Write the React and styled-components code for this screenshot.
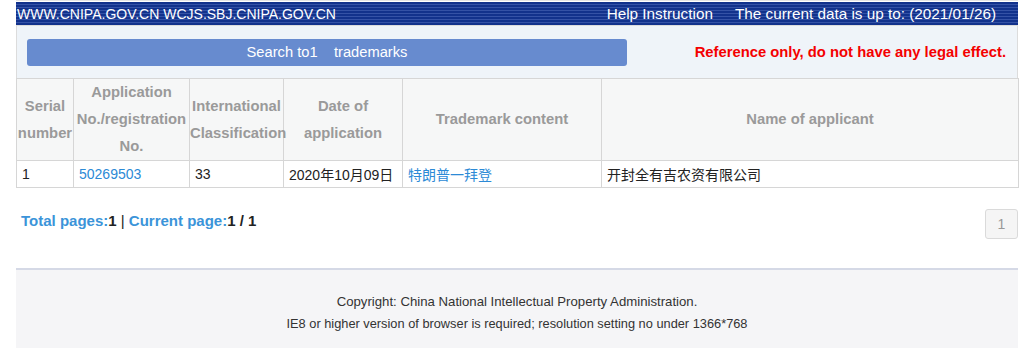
import React from 'react'
import styled, { createGlobalStyle } from 'styled-components'

const Global = createGlobalStyle`
  body {
    margin: 0;
    background: #fff;
    font-family: "Liberation Sans", "Noto Sans CJK SC", sans-serif;
  }
`

const Page = styled.div`
  width: 1002px;
  margin-left: 16px;
  padding-top: 1px;
  border-top: 1px solid #e4e4e4;
`

const TopBar = styled.div`
  height: 23px;
  display: flex;
  align-items: center;
  justify-content: space-between;
  padding: 0 22px 0 1px;
  color: #fff;
  font-size: 14px;
  background: repeating-linear-gradient(
    to bottom,
    #12328c 0px,
    #12328c 2px,
    #3452a6 2px,
    #3452a6 3px
  );
`

const TopLinks = styled.div`
  display: flex;
  gap: 22px;
  font-size: 15.3px;
`

const SearchPanel = styled.div`
  height: 52px;
  display: flex;
  align-items: center;
  justify-content: space-between;
  padding: 0 11px 0 10px;
  background: #eff4f9;
  border: 1px solid #dcdcdc;
  border-bottom: none;
`

const SearchButton = styled.div`
  width: 600px;
  height: 27px;
  border-radius: 3px;
  background: #678bcf;
  color: #fff;
  font-size: 14.7px;
  display: flex;
  align-items: center;
  justify-content: center;
  white-space: pre;
`

const Notice = styled.div`
  color: #f40000;
  font-weight: bold;
  font-size: 14.8px;
`

const Table = styled.table`
  width: 100%;
  table-layout: fixed;
  border-collapse: collapse;
  font-size: 14px;
`

const Th = styled.th`
  height: 81px;
  padding: 0;
  border: 1px solid #d6d6d6;
  background: #f6f7f7;
  color: #9a9a9a;
  font-weight: bold;
  font-size: 14.8px;
  line-height: 27px;
  text-align: center;
  white-space: nowrap;
`

const Td = styled.td`
  height: 26px;
  padding: 0 5px;
  border: 1px solid #d6d6d6;
  color: ${p => (p.$link ? '#2c8ad6' : '#222')};
  text-align: left;
  white-space: nowrap;
`

const Pager = styled.div`
  display: flex;
  justify-content: space-between;
  align-items: flex-start;
  padding: 21px 0 0 5px;
  height: 59px;
`

const PageInfo = styled.div`
  font-size: 15px;
  font-weight: bold;
  color: #3b94d9;
  padding-top: 3px;
  b {
    color: #222;
  }
`

const Divider = styled.span`
  color: #222;
  font-weight: normal;
`

const PageButton = styled.div`
  width: 31px;
  height: 28px;
  border: 1px solid #dadada;
  border-radius: 3px;
  background: #f5f5f5;
  color: #999;
  font-size: 14px;
  display: flex;
  align-items: center;
  justify-content: center;
`

const Footer = styled.footer`
  border-top: 2px solid #d5d9e6;
  background: #f5f5f7;
  height: 80px;
  padding-top: 21px;
  box-sizing: border-box;
  text-align: center;
  font-size: 13.2px;
  line-height: 22px;
  color: #333;
`

const FooterLine = styled.div`
  font-size: ${p => p.$size || 13.2}px;
`

const headers = [
  { w: 57, t: ['Serial', 'number'] },
  { w: 116, t: ['Application', 'No./registration', 'No.'] },
  { w: 94, t: ['International', 'Classification'] },
  { w: 119, t: ['Date of', 'application'] },
  { w: 199, t: ['Trademark content'] },
  { w: 417, t: ['Name of applicant'] },
]

export default function App() {
  return (
    <>
      <Global />
      <Page>
        <TopBar>
          <span>WWW.CNIPA.GOV.CN WCJS.SBJ.CNIPA.GOV.CN</span>
          <TopLinks>
            <span>Help Instruction</span>
            <span>The current data is up to: (2021/01/26)</span>
          </TopLinks>
        </TopBar>
        <SearchPanel>
          <SearchButton>Search to1    trademarks</SearchButton>
          <Notice>Reference only, do not have any legal effect.</Notice>
        </SearchPanel>
        <Table>
          <colgroup>
            {headers.map((h, i) => (
              <col key={i} style={{ width: h.w }} />
            ))}
          </colgroup>
          <thead>
            <tr>
              {headers.map((h, i) => (
                <Th key={i}>
                  {h.t.map((l, j) => (
                    <div key={j}>{l}</div>
                  ))}
                </Th>
              ))}
            </tr>
          </thead>
          <tbody>
            <tr>
              <Td>1</Td>
              <Td $link>50269503</Td>
              <Td>33</Td>
              <Td>2020年10月09日</Td>
              <Td $link>特朗普一拜登</Td>
              <Td>开封全有吉农资有限公司</Td>
            </tr>
          </tbody>
        </Table>
        <Pager>
          <PageInfo>
            Total pages:<b>1</b> <Divider>|</Divider> Current page:<b>1 / 1</b>
          </PageInfo>
          <PageButton>1</PageButton>
        </Pager>
        <Footer>
          <FooterLine>Copyright: China National Intellectual Property Administration.</FooterLine>
          <FooterLine $size={12.8}>IE8 or higher version of browser is required; resolution setting no under 1366*768</FooterLine>
        </Footer>
      </Page>
    </>
  )
}
